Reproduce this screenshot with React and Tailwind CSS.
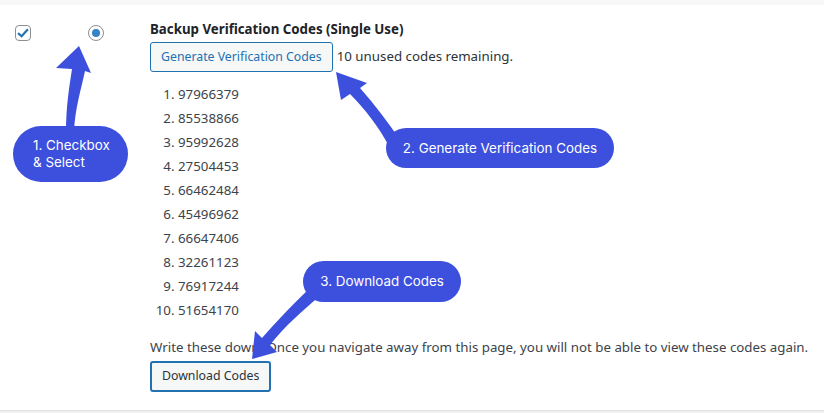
import React from 'react';

const codes = ['97966379', '85538866', '95992628', '27504453', '66462484', '45496962', '66647406', '32261123', '76917244', '51654170'];

const Callout = ({ className, children }) => (
    <div
        className={`absolute flex items-center bg-[#3c4fdd] text-white text-[13.4px] leading-[17px] rounded-full ${className}`}
        style={{ fontFamily: 'Inter, sans-serif' }}
    >
        {children}
    </div>
);

const App = () => {
    return (
        <div
            className="relative w-[824px] h-[413px] flex flex-col bg-white overflow-hidden text-[#3c434a]"
            style={{ fontFamily: '"Noto Sans", sans-serif' }}
        >
            <div className="h-[5px] bg-[#f8f8f8]" />

            <div className="flex flex-1">
                {/* Checkbox + radio column */}
                <div className="w-[150px] flex items-start pt-[20px]">
                    <div className="ml-[15px] w-4 h-4 border border-[#8c8f94] rounded-[4px] flex items-center justify-center">
                        <svg viewBox="0 0 20 20" className="w-[15px] h-[15px]">
                            <path d="M4 10.5 L8 14 L16 5" fill="none" stroke="#2271b1" strokeWidth="3" strokeLinecap="square" />
                        </svg>
                    </div>
                    <div className="ml-[57px] w-4 h-4 border border-[#8c8f94] rounded-full flex items-center justify-center">
                        <div className="w-2 h-2 rounded-full bg-[#3582c4]" />
                    </div>
                </div>

                {/* Main content */}
                <div className="flex-1 pt-[14px]">
                    <div className="text-[13.3px] leading-[20px] font-bold text-[#1d2327]">Backup Verification Codes (Single Use)</div>
                    <div className="flex items-center mt-[3px] gap-[4px]">
                        <button className="h-[30px] px-[10px] border border-[#2271b1] rounded-[3px] bg-[#f6f7f7] text-[#2271b1] text-[12.3px]">
                            Generate Verification Codes
                        </button>
                        <span className="text-[13.3px] text-[#2c3338]">10 unused codes remaining.</span>
                    </div>
                    <ol className="list-decimal pl-[28px] mt-[10px] text-[13.3px]">
                        {codes.map((code) => (
                            <li key={code} className="h-[24px] leading-[24px]">{code}</li>
                        ))}
                    </ol>
                    <p className="mt-[15px] text-[13.3px] leading-[20px] whitespace-nowrap">
                        Write these down. Once you navigate away from this page, you will not be able to view these codes again.
                    </p>
                    <button className="mt-[4px] h-[31px] px-[10px] border-2 border-[#2271b1] rounded-[3px] bg-[#f6f7f7] text-[#2c3338] text-[12.3px]">
                        Download Codes
                    </button>
                </div>
            </div>

            <div className="h-[3px] bg-[#f0f0f1] border-t border-[#e2e2e2]" />

            {/* Arrows */}
            <svg className="absolute inset-0 pointer-events-none" width="824" height="413" viewBox="0 0 824 413">
                <path fill="#3c4fdd" d="M79,46 L91,73 L85,71 C81,90 75,108 74,132 L66,132 C66,108 69,88 72,69 L56,68 Z" />
                <path fill="#3c4fdd" d="M336,72 L367,83 L360,88 C375,105 388,122 400,140 L389,146 C378,126 365,109 350,94 L341,100 Z" />
                <path fill="#3c4fdd" d="M252,359 L255,331 L262,338 C278,320 295,302 310,288 L320,296 C303,310 285,326 270,345 L277,352 Z" />
            </svg>

            {/* Callouts */}
            <Callout className="left-[13px] top-[126px] w-[115px] h-[56px] pl-[20px]">
                <span>1. Checkbox<br />&amp; Select</span>
            </Callout>
            <Callout className="left-[386px] top-[128px] w-[228px] h-[40px] justify-center">
                2. Generate Verification Codes
            </Callout>
            <Callout className="left-[303px] top-[261px] w-[158px] h-[41px] justify-center">
                3. Download Codes
            </Callout>
        </div>
    );
};

export default App;
